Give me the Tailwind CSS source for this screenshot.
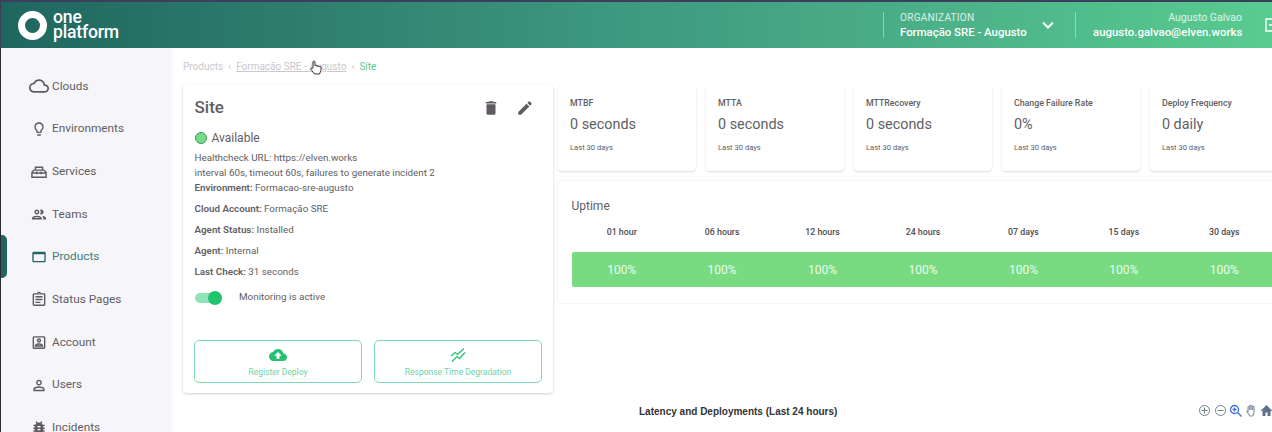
<!DOCTYPE html>
<html lang="en">
<head>
    <meta charset="UTF-8">
    <meta name="viewport" content="width=device-width, initial-scale=1.0">
    <title>Site - One Platform</title>
    <script src="https://cdn.jsdelivr.net/npm/@tailwindcss/browser@4"></script>
</head>
<body class="h-[432px] w-[1272px] overflow-hidden bg-white font-['Roboto',sans-serif] text-[#625e63]">
    <!-- header -->
    <header class="flex h-[48px] items-center border-l border-t-2 border-[#3c3f5c] bg-gradient-to-r from-[#1f665f] via-[#3f9a80] to-[#59cb90] text-white">
        <div class="ml-[17px] flex items-center gap-[6px]">
            <div class="h-[29px] w-[29px] rounded-full border-[7px] border-white"></div>
            <div class="text-[17.6px] font-medium tracking-[-0.2px]">
                <div class="h-[14px] leading-[13px]">one</div>
                <div class="h-[15px] leading-[15px]">platform</div>
            </div>
        </div>
        <div class="ml-auto flex h-[26px] items-center border-l border-white/40 pl-[16px]">
            <div class="w-[127px]">
                <div class="text-[10px] leading-[14px] tracking-[0.3px] text-white/80">ORGANIZATION</div>
                <div class="whitespace-nowrap text-[11.4px] font-medium leading-[15px]">Formação SRE - Augusto</div>
            </div>
            <svg class="ml-[14px]" width="14" height="14" viewBox="0 0 14 14" fill="none" stroke="white" stroke-width="2"><path d="M2 4.5l5 5 5-5"/></svg>
        </div>
        <div class="ml-[20px] flex h-[26px] items-center border-l border-white/40 pl-[17px] text-right">
            <div class="w-[149px]">
                <div class="text-[10.5px] leading-[14px] text-white/80">Augusto Galvao</div>
                <div class="whitespace-nowrap text-[11.4px] font-medium leading-[15px]">augusto.galvao@elven.works</div>
            </div>
        </div>
        <svg class="ml-[22px] mr-[-8px] shrink-0" width="16" height="16" viewBox="0 0 16 16" fill="none" stroke="white" stroke-width="1.4"><path d="M14 3V2H2v12h12v-1M5 8h9M11 5l3 3-3 3"/></svg>
    </header>

    <div class="flex h-[384px]">
        <!-- sidebar -->
        <aside class="relative w-[171px] shrink-0 overflow-hidden border-l border-[#2b2a30] bg-[#f6f5f9] pl-[28px] pt-[17px] text-[11.8px] shadow-[1px_0_3px_rgba(0,0,0,0.03)]">
            <div class="absolute left-0 top-[187px] h-[43px] w-[6px] rounded-r-[5px] bg-[#24645f]"></div>
            <nav class="flex flex-col">
                <a class="flex h-[42.7px] items-center gap-[3px]">
                    <svg class="w-[20px] shrink-0" width="20" height="20" viewBox="0 0 24 24" fill="#5f5b60"><path d="M19.35 10.04C18.67 6.59 15.64 4 12 4 9.11 4 6.6 5.64 5.35 8.04 2.34 8.36 0 10.91 0 14c0 3.31 2.69 6 6 6h13c2.76 0 5-2.24 5-5 0-2.64-2.05-4.78-4.65-4.96zM19 18H6c-2.21 0-4-1.79-4-4s1.79-4 4-4h.71C7.37 7.69 9.48 6 12 6c3.04 0 5.5 2.46 5.5 5.5v.5H19c1.66 0 3 1.34 3 3s-1.34 3-3 3z"/></svg>
                    Clouds
                </a>
                <a class="flex h-[42.7px] items-center gap-[3px]">
                    <svg class="w-[20px] shrink-0" width="16" height="16" viewBox="0 0 24 24" fill="#5f5b60"><path d="M9 21c0 .55.45 1 1 1h4c.55 0 1-.45 1-1v-1H9v1zm3-19C8.14 2 5 5.14 5 9c0 2.38 1.19 4.47 3 5.74V17c0 .55.45 1 1 1h6c.55 0 1-.45 1-1v-2.26c1.81-1.27 3-3.36 3-5.74 0-3.86-3.14-7-7-7zm2.85 11.1l-.85.6V16h-4v-2.3l-.85-.6C7.8 12.16 7 10.63 7 9c0-2.76 2.24-5 5-5s5 2.24 5 5c0 1.63-.8 3.16-2.15 4.1z"/></svg>
                    Environments
                </a>
                <a class="flex h-[42.7px] items-center gap-[3px]">
                    <svg class="w-[20px] shrink-0" width="17" height="17" viewBox="0 0 24 24" fill="none" stroke="#5f5b60" stroke-width="2"><path d="M2 20v-7l3-3h14l3 3v7zM2 14h20M7 10V6h10v4M9 12v4M15 12v4"/></svg>
                    Services
                </a>
                <a class="flex h-[42.7px] items-center gap-[3px]">
                    <svg class="w-[20px] shrink-0" width="17" height="17" viewBox="0 0 24 24" fill="#5f5b60"><path d="M9 13.75c-2.34 0-7 1.17-7 3.5V19h14v-1.75c0-2.33-4.66-3.5-7-3.5zM4.34 17c.84-.58 2.87-1.25 4.66-1.25s3.82.67 4.66 1.25H4.34zM9 12c1.93 0 3.5-1.57 3.5-3.5S10.93 5 9 5 5.5 6.57 5.5 8.5 7.07 12 9 12zm0-5c.83 0 1.5.67 1.5 1.5S9.83 10 9 10s-1.5-.67-1.5-1.5S8.17 7 9 7zm7.04 6.81c1.16.84 1.96 1.96 1.96 3.44V19h4v-1.75c0-2.02-3.5-3.17-5.96-3.44zM15 12c1.93 0 3.5-1.57 3.5-3.5S16.93 5 15 5c-.54 0-1.04.13-1.5.35.63.89 1 1.98 1 3.15s-.37 2.26-1 3.15c.46.22.96.35 1.5.35z"/></svg>
                    Teams
                </a>
                <a class="flex h-[42.7px] items-center gap-[3px] text-[#3f7d79]">
                    <svg class="w-[20px] shrink-0" width="16" height="16" viewBox="0 0 24 24" fill="#24645f"><path d="M20 4H4c-1.11 0-2 .9-2 2v12c0 1.1.89 2 2 2h16c1.1 0 2-.9 2-2V6c0-1.1-.9-2-2-2zm0 14H4V8h16v10z"/></svg>
                    Products
                </a>
                <a class="flex h-[42.7px] items-center gap-[3px]">
                    <svg class="w-[20px] shrink-0" width="17" height="17" viewBox="0 0 24 24" fill="#5f5b60"><path d="M7 15h7v2H7zm0-4h10v2H7zm0-4h10v2H7zm12-4h-4.18C14.4 1.84 13.3 1 12 1c-1.3 0-2.4.84-2.82 2H5c-.14 0-.27.01-.4.04-.39.08-.74.28-1.01.55-.18.18-.33.4-.43.64-.1.23-.16.49-.16.77v14c0 .27.06.54.16.78s.25.45.43.64c.27.27.62.47 1.01.55.13.02.26.03.4.03h14c1.1 0 2-.9 2-2V5c0-1.1-.9-2-2-2zm-7-.25c.41 0 .75.34.75.75s-.34.75-.75.75-.75-.34-.75-.75.34-.75.75-.75zM19 19H5V5h14v14z"/></svg>
                    Status Pages
                </a>
                <a class="flex h-[42.7px] items-center gap-[3px]">
                    <svg class="w-[20px] shrink-0" width="17" height="17" viewBox="0 0 24 24" fill="#5f5b60"><path d="M19 3H5c-1.1 0-2 .9-2 2v14c0 1.1.9 2 2 2h14c1.1 0 2-.9 2-2V5c0-1.1-.9-2-2-2zm0 16H5V5h14v14zM12 12c1.65 0 3-1.35 3-3s-1.35-3-3-3-3 1.35-3 3 1.35 3 3 3zm0-4c.55 0 1 .45 1 1s-.45 1-1 1-1-.45-1-1 .45-1 1-1zm6 8.58c0-2.5-3.97-3.58-6-3.58s-6 1.08-6 3.58V18h12v-1.42zM8.48 16c.74-.51 2.23-1 3.52-1s2.78.49 3.52 1H8.48z"/></svg>
                    Account
                </a>
                <a class="flex h-[42.7px] items-center gap-[3px]">
                    <svg class="w-[20px] shrink-0" width="17" height="17" viewBox="0 0 24 24" fill="#5f5b60"><path d="M12 6c1.1 0 2 .9 2 2s-.9 2-2 2-2-.9-2-2 .9-2 2-2m0 9c2.7 0 5.8 1.29 6 2v1H6v-.99c.2-.72 3.3-2.01 6-2.01M12 4C9.79 4 8 5.79 8 8s1.79 4 4 4 4-1.79 4-4-1.79-4-4-4zm0 9c-2.67 0-8 1.34-8 4v3h16v-3c0-2.66-5.33-4-8-4z"/></svg>
                    Users
                </a>
                <a class="flex h-[42.7px] items-center gap-[3px]">
                    <svg class="w-[20px] shrink-0" width="17" height="17" viewBox="0 0 24 24" fill="#5f5b60"><path d="M20 8h-2.81c-.45-.78-1.07-1.45-1.82-1.96L17 4.41 15.59 3l-2.17 2.17C12.96 5.06 12.49 5 12 5s-.96.06-1.41.17L8.41 3 7 4.41l1.62 1.63C7.88 6.55 7.26 7.22 6.81 8H4v2h2.09c-.05.33-.09.66-.09 1v1H4v2h2v1c0 .34.04.67.09 1H4v2h2.81c1.04 1.79 2.97 3 5.19 3s4.15-1.21 5.19-3H20v-2h-2.09c.05-.33.09-.66.09-1v-1h2v-2h-2v-1c0-.34-.04-.67-.09-1H20V8zm-6 8h-4v-2h4v2zm0-4h-4v-2h4v2z"/></svg>
                    Incidents
                </a>
            </nav>
        </aside>

        <!-- main -->
        <main class="relative min-w-0 flex-1 pl-[12px]">
            <div class="flex h-[37px] items-center gap-[5px] whitespace-nowrap text-[10px] text-[#c9c7cb]">
                <span>Products</span><span>‹</span>
                <span class="underline">Formação SRE - Augusto</span><span>‹</span>
                <span class="text-[#57c994]">Site</span>
            </div>
            <!-- hand cursor -->
            <svg class="absolute left-[139px] top-[12px]" width="13" height="15" viewBox="0 0 13 15" fill="white" stroke="#333" stroke-width="1"><path d="M3 8V2c0-1.3 2-1.3 2 0v4c0-1 2-1 2 0v.5c0-1 2-1 2 0V7c0-1 2-1 2 0v3.5L9.5 14h-5L1 9.5c-.6-1 .8-2 1.5-1z"/></svg>

            <div class="flex items-start gap-[5px]">
                <!-- site card -->
                <section class="h-[308px] w-[370px] shrink-0 rounded-[4px] bg-white px-[11px] shadow-[0_1px_3px_rgba(0,0,0,0.2)]">
                    <div class="flex h-[46px] items-center pl-[0.5px]">
                        <h1 class="text-[17px] font-medium">Site</h1>
                        <svg class="ml-auto" width="18" height="18" viewBox="0 0 24 24" fill="#5f5b60"><path d="M6 19c0 1.1.9 2 2 2h8c1.1 0 2-.9 2-2V7H6v12zM19 4h-3.5l-1-1h-5l-1 1H5v2h14V4z"/></svg>
                        <svg class="ml-[16px] mr-[8px]" width="18" height="18" viewBox="0 0 24 24" fill="#5f5b60"><path d="M3 17.25V21h3.75L17.81 9.94l-3.75-3.75L3 17.25zM20.71 7.04c.39-.39.39-1.02 0-1.41l-2.34-2.34c-.39-.39-1.02-.39-1.41 0l-1.83 1.83 3.75 3.75 1.83-1.83z"/></svg>
                    </div>
                    <div class="flex h-[14px] items-center gap-[5px] pl-[0.5px] text-[12px]">
                        <span class="h-[12px] w-[12px] rounded-full border border-[#3f9a60] bg-[#78d987]"></span>
                        Available
                    </div>
                    <div class="mt-[5px] pl-[0.5px] text-[9.8px] leading-[15px]">
                        <p>Healthcheck URL: https://elven.works</p>
                        <p>interval 60s, timeout 60s, failures to generate incident 2</p>
                        <p><b class="font-semibold">Environment:</b> Formacao-sre-augusto</p>
                        <p class="mt-[5.9px]"><b class="font-semibold">Cloud Account:</b> Formação SRE</p>
                        <p class="mt-[5.9px]"><b class="font-semibold">Agent Status:</b> Installed</p>
                        <p class="mt-[5.9px]"><b class="font-semibold">Agent:</b> Internal</p>
                        <p class="mt-[5.9px]"><b class="font-semibold">Last Check:</b> 31 seconds</p>
                    </div>
                    <div class="mt-[11px] flex h-[16px] items-center pl-[0.5px] text-[9.9px]">
                        <div class="relative h-[10px] w-[27px] rounded-full bg-[#8fe3b5]">
                            <span class="absolute right-0 top-[-2px] h-[14px] w-[14px] rounded-full bg-[#1fc46d]"></span>
                        </div>
                        <span class="ml-[17.5px]">Monitoring is active</span>
                    </div>
                    <div class="mt-[34px] flex gap-[12px] text-[8.5px] text-[#6fd3a2]">
                        <button class="flex h-[43px] w-[168px] flex-col items-center justify-center rounded-[5px] border border-[#7fdab0] pt-[3px]">
                            <svg width="18" height="16" viewBox="0 0 24 20" fill="#27c174"><path d="M19.35 8.04C18.67 4.59 15.64 2 12 2 9.11 2 6.6 3.64 5.35 6.04 2.34 6.36 0 8.91 0 12c0 3.31 2.69 6 6 6h13c2.76 0 5-2.24 5-5 0-2.64-2.05-4.78-4.65-4.96zM14 11v4h-4v-4H7l5-5 5 5h-3z"/></svg>
                            <span class="mt-[3px]">Register Deploy</span>
                        </button>
                        <button class="flex h-[43px] w-[168px] flex-col items-center justify-center rounded-[5px] border border-[#7fdab0] pt-[3px]">
                            <svg width="16" height="16" viewBox="0 0 16 16" fill="none" stroke="#27c174" stroke-width="1.3"><path d="M1 9l4-3.5 2.5 2L14 1.5M2 14.5l5-5 2.5 2L15 5.5"/></svg>
                            <span class="mt-[3px]">Response Time Degradation</span>
                        </button>
                    </div>
                </section>

                <!-- right column -->
                <div class="min-w-0 flex-1">
                    <div class="flex gap-[10.3px]">
                        <div class="h-[86px] w-[137.7px] shrink-0 rounded-[4px] bg-white pl-[12px] pt-[12px] shadow-[0_1px_2px_rgba(0,0,0,0.15)]">
                            <div class="text-[8.8px] font-medium leading-[12px]">MTBF</div>
                            <div class="mt-[7px] text-[14.4px] leading-[18px]">0 seconds</div>
                            <div class="mt-[8px] text-[7.6px] leading-[12px]">Last 30 days</div>
                        </div>
                        <div class="h-[86px] w-[137.7px] shrink-0 rounded-[4px] bg-white pl-[12px] pt-[12px] shadow-[0_1px_2px_rgba(0,0,0,0.15)]">
                            <div class="text-[8.8px] font-medium leading-[12px]">MTTA</div>
                            <div class="mt-[7px] text-[14.4px] leading-[18px]">0 seconds</div>
                            <div class="mt-[8px] text-[7.6px] leading-[12px]">Last 30 days</div>
                        </div>
                        <div class="h-[86px] w-[137.7px] shrink-0 rounded-[4px] bg-white pl-[12px] pt-[12px] shadow-[0_1px_2px_rgba(0,0,0,0.15)]">
                            <div class="text-[8.8px] font-medium leading-[12px]">MTTRecovery</div>
                            <div class="mt-[7px] text-[14.4px] leading-[18px]">0 seconds</div>
                            <div class="mt-[8px] text-[7.6px] leading-[12px]">Last 30 days</div>
                        </div>
                        <div class="h-[86px] w-[137.7px] shrink-0 rounded-[4px] bg-white pl-[12px] pt-[12px] shadow-[0_1px_2px_rgba(0,0,0,0.15)]">
                            <div class="text-[8.8px] font-medium leading-[12px]">Change Failure Rate</div>
                            <div class="mt-[7px] text-[14.4px] leading-[18px]">0%</div>
                            <div class="mt-[8px] text-[7.6px] leading-[12px]">Last 30 days</div>
                        </div>
                        <div class="h-[86px] w-[137.7px] shrink-0 rounded-[4px] bg-white pl-[12px] pt-[12px] shadow-[0_1px_2px_rgba(0,0,0,0.15)]">
                            <div class="text-[8.8px] font-medium leading-[12px]">Deploy Frequency</div>
                            <div class="mt-[7px] text-[14.4px] leading-[18px]">0 daily</div>
                            <div class="mt-[8px] text-[7.6px] leading-[12px]">Last 30 days</div>
                        </div>
                    </div>
                    <!-- uptime -->
                    <section class="mt-[10px] h-[122px] w-[730px] rounded-[4px] bg-white pl-[13.5px] pt-[18px] shadow-[0_0_2px_rgba(0,0,0,0.15)]">
                        <h2 class="text-[12px] leading-[14px]">Uptime</h2>
                        <div class="mt-[13px] grid w-[703px] grid-cols-7 text-center text-[8.8px] font-medium leading-[12px] text-[#4f4c50]">
                            <span>01 hour</span><span>06 hours</span><span>12 hours</span><span>24 hours</span><span>07 days</span><span>15 days</span><span>30 days</span>
                        </div>
                        <div class="mt-[14px] grid h-[35px] w-[703px] grid-cols-7 items-center rounded-[2px] bg-[#78db82] text-center text-[12px] text-white/85">
                            <span>100%</span><span>100%</span><span>100%</span><span>100%</span><span>100%</span><span>100%</span><span>100%</span>
                        </div>
                    </section>
                </div>
            </div>

            <!-- chart title and toolbar -->
            <div class="absolute left-[468px] top-[356px] whitespace-nowrap font-['Liberation_Sans',sans-serif] text-[10px] font-bold text-[#333]">Latency and Deployments (Last 24 hours)</div>
            <div class="absolute right-0 top-[356px] flex items-center gap-[2.5px]">
                <svg width="13" height="13" viewBox="0 0 13 13" fill="none" stroke="#6e8192"><circle cx="6.5" cy="6.5" r="5"/><path d="M3.5 6.5h6M6.5 3.5v6"/></svg>
                <svg width="13" height="13" viewBox="0 0 13 13" fill="none" stroke="#6e8192"><circle cx="6.5" cy="6.5" r="5"/><path d="M3.5 6.5h6"/></svg>
                <svg width="13" height="13" viewBox="0 0 13 13" fill="none" stroke="#3f6fd8" stroke-width="1.3"><circle cx="5.5" cy="5.5" r="4"/><path d="M8.5 8.5l4 4M3.5 5.5h4M5.5 3.5v4"/></svg>
                <svg width="13" height="13" viewBox="0 0 13 13" fill="none" stroke="#8a97a3" stroke-width="1.2"><path d="M3 7V3.5c0-1 1.5-1 1.5 0V2c0-1 1.5-1 1.5 0v.5c0-1 1.5-1 1.5 0V3c0-1 1.5-1 1.5 0v6l-1.5 3H5L2 8c-.5-.8.5-1.5 1-1zM4.5 3.5V6M6 2.5V6M7.5 3V6"/></svg>
                <svg class="mr-[-1px]" width="13" height="13" viewBox="0 0 13 13" fill="#5f7488"><path d="M6.5 1L.5 7h2v5h3V8.5h2V12h3V7h2z"/></svg>
            </div>
        </main>
    </div>
</body>
</html>
